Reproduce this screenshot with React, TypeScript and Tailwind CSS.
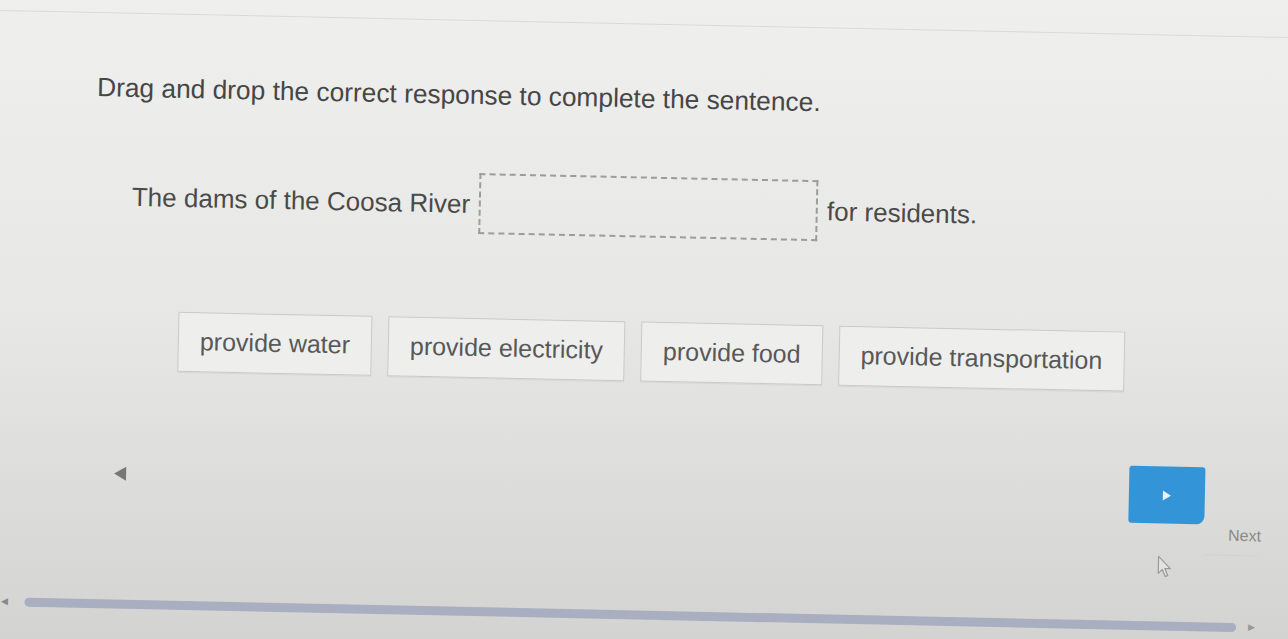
import React from "react";

const options = ["provide water", "provide electricity", "provide food", "provide transportation"];

function ArrowLeft() {
    return (
        <svg width="14" height="16" viewBox="0 0 14 16">
            <polygon points="13,1 13,15 1,8" fill="#777" />
        </svg>
    );
}

function Pointer() {
    return (
        <svg width="16" height="24" viewBox="0 0 16 24">
            <path
                d="M2 2 L2 19 L6 15 L9 22 L11.5 21 L8.5 14 L14 14 Z"
                fill="#e2e2e0"
                stroke="#9a9a9a"
                strokeWidth="1.2"
                strokeLinejoin="round"
            />
        </svg>
    );
}

export default function App() {
    return (
        <div
            className="w-full h-[639px] overflow-hidden bg-linear-to-b from-[#efefed] via-[#e7e7e5] to-[#d3d3d1]"
            style={{ fontFamily: '"Liberation Sans", Arial, sans-serif' }}
        >
            <div className="relative w-[1288px] h-[639px] origin-top-left rotate-[1.2deg] flex flex-col">
                {/* top edge of the frame */}
                <div className="mt-[10px] h-px w-full bg-[#dadad8]" />

                {/* prompt */}
                <h1 className="mt-[59px] pl-[99px] text-[26.3px] leading-[30px] text-[#464646]">
                    Drag and drop the correct response to complete the sentence.
                </h1>

                {/* sentence with the drop target */}
                <div className="mt-[63px] pl-[136px] flex items-center text-[26px] leading-[30px] text-[#4a4a4a]">
                    <span>The dams of the Coosa River</span>
                    <div className="mx-[9px] w-[339px] h-[61px] border-2 border-dashed border-[#9c9c9a]" />
                    <span>for residents.</span>
                </div>

                {/* draggable answers */}
                <div className="mt-[84px] pl-[185px] flex gap-4">
                    {options.map((option) => (
                        <div
                            key={option}
                            className="h-[60px] px-[21px] flex items-center border border-[#c9c9c7] bg-[#eeeeec] shadow-[0_1px_1px_rgba(0,0,0,0.06)] text-[25px] text-[#585858]"
                        >
                            {option}
                        </div>
                    ))}
                </div>

                {/* navigation */}
                <div className="mt-[74px] flex items-start">
                    <div className="ml-[123px] mt-[21px]">
                        <ArrowLeft />
                    </div>
                    <div className="relative ml-auto mr-[13px] w-[136px] flex flex-col">
                        <button className="w-[76px] h-[57px] rounded-[3px] rounded-br-[8px] bg-[#3394d7] flex items-center justify-center">
                            <svg width="10" height="12" viewBox="0 0 10 12">
                                <polygon points="1,1 9,6 1,11" fill="#e6f2fb" />
                            </svg>
                        </button>
                        <span className="self-end mr-[3px] mt-[2px] text-[16px] leading-[18px] text-[#8a8a8a]">Next</span>
                        <div className="self-end mt-[10px] mr-[6px] w-[54px] h-px bg-[#d2d2d0]" />
                        <div className="absolute left-[29px] top-[88px]">
                            <Pointer />
                        </div>
                    </div>
                </div>

                {/* horizontal scrollbar */}
                <div className="mt-[65px] flex items-center">
                    <span className="ml-[14px] text-[9px] text-[#888]">◀</span>
                    <div className="ml-[16px] w-[1212px] h-[9px] rounded-full bg-[#a9afc1]" />
                    <span className="ml-[12px] text-[9px] text-[#999]">▶</span>
                </div>
            </div>
        </div>
    );
}
